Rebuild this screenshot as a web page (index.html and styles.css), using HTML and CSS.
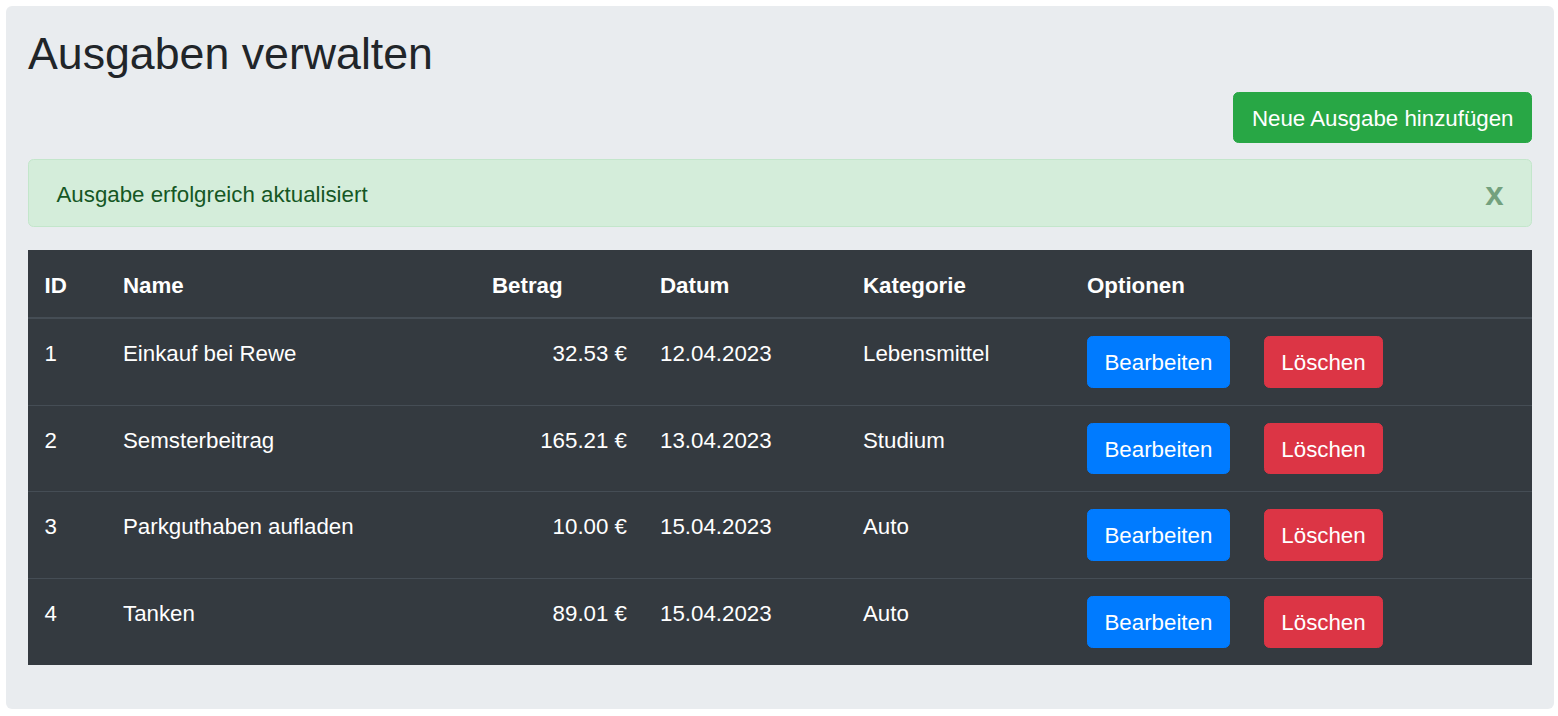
FILE: index.html
```html
<!DOCTYPE html>
<html lang="de">
<head>
<meta charset="utf-8">
<title>Ausgaben verwalten</title>
<link rel="stylesheet" href="styles.css">
</head>
<body>
<div class="jumbotron">
  <h1 class="title">Ausgaben verwalten</h1>
  <div class="toolbar">
    <button class="btn btn-success">Neue Ausgabe hinzufügen</button>
  </div>
  <div class="alert">
    <span>Ausgabe erfolgreich aktualisiert</span>
    <button class="close">x</button>
  </div>
  <table class="table">
    <colgroup>
      <col class="c-id"><col class="c-name"><col class="c-amount"><col class="c-date"><col class="c-cat"><col class="c-opt">
    </colgroup>
    <thead>
      <tr><th>ID</th><th>Name</th><th>Betrag</th><th>Datum</th><th>Kategorie</th><th>Optionen</th></tr>
    </thead>
    <tbody>
      <tr><td>1</td><td>Einkauf bei Rewe</td><td class="num">32.53 €</td><td>12.04.2023</td><td>Lebensmittel</td><td><div class="opts"><button class="btn btn-primary">Bearbeiten</button><button class="btn btn-danger">Löschen</button></div></td></tr>
      <tr><td>2</td><td>Semsterbeitrag</td><td class="num">165.21 €</td><td>13.04.2023</td><td>Studium</td><td><div class="opts"><button class="btn btn-primary">Bearbeiten</button><button class="btn btn-danger">Löschen</button></div></td></tr>
      <tr><td>3</td><td>Parkguthaben aufladen</td><td class="num">10.00 €</td><td>15.04.2023</td><td>Auto</td><td><div class="opts"><button class="btn btn-primary">Bearbeiten</button><button class="btn btn-danger">Löschen</button></div></td></tr>
      <tr><td>4</td><td>Tanken</td><td class="num">89.01 €</td><td>15.04.2023</td><td>Auto</td><td><div class="opts"><button class="btn btn-primary">Bearbeiten</button><button class="btn btn-danger">Löschen</button></div></td></tr>
    </tbody>
  </table>
</div>
</body>
</html>
```
FILE: styles.css
```css
* { box-sizing: border-box; }
html, body { margin: 0; padding: 0; }
body {
  font-family: "Liberation Sans", Arial, sans-serif;
  font-size: 22.3px;
  line-height: 33px;
  color: #212529;
  background: #fff;
  padding: 6px 4px 0 6px;
}
.jumbotron {
  background: #e9ecef;
  border-radius: 6px;
  padding: 22px 22px 22px;
  height: 703px;
}
.title {
  margin: 0 0 11px;
  font-size: 44.7px;
  font-weight: 500;
  line-height: 52.8px;
}
.toolbar {
  display: flex;
  justify-content: flex-end;
  margin-bottom: 16px;
}
.btn {
  font-family: inherit;
  font-size: 22.3px;
  line-height: 33px;
  padding: 8.75px 16.5px 7.75px;
  border: 1px solid transparent;
  border-radius: 5.5px;
  color: #fff;
  cursor: pointer;
  height: 51.7px;
}
.btn-success {
  background: #28a745;
  border-color: #28a745;
  padding-left: 17.5px;
  padding-right: 17.5px;
}
.btn-primary { background: #007bff; border-color: #007bff; }
.btn-danger { background: #dc3545; border-color: #dc3545; }
.alert {
  position: relative;
  display: flex;
  align-items: center;
  height: 68px;
  padding: 17.5px 27.5px 15.5px;
  margin-bottom: 23px;
  background: #d4edda;
  border: 1px solid #c3e6cb;
  border-radius: 5.5px;
  color: #155724;
}
.close {
  position: absolute;
  top: 0;
  right: 0;
  padding: 16.5px 27.5px;
  background: transparent;
  border: 0;
  font-family: inherit;
  font-size: 33px;
  font-weight: 700;
  line-height: 1;
  color: #155724;
  opacity: .5;
}
.table {
  width: 100%;
  border-collapse: collapse;
  table-layout: fixed;
  background: #343a40;
  color: #fff;
}
.c-id { width: 78.5px; }
.c-name { width: 369px; }
.c-amount { width: 168px; }
.c-date { width: 203px; }
.c-cat { width: 224px; }
.table th, .table td {
  text-align: left;
  vertical-align: top;
  line-height: 33px;
}
.table th {
  padding: 19px 16.5px 14px;
  font-weight: 700;
  border-bottom: 2px solid #454d55;
  height: 68px;
}
.table td {
  padding: 17px 16.5px 16px;
  border-top: 1px solid #454d55;
  height: 86.7px;
}
.table td:not(:last-child) { padding-top: 18px; padding-bottom: 15px; }
.table thead + tbody tr:first-child td { border-top: 0; }
.table td.num { text-align: right; }
.opts {
  display: flex;
  gap: 34px;
}
```
